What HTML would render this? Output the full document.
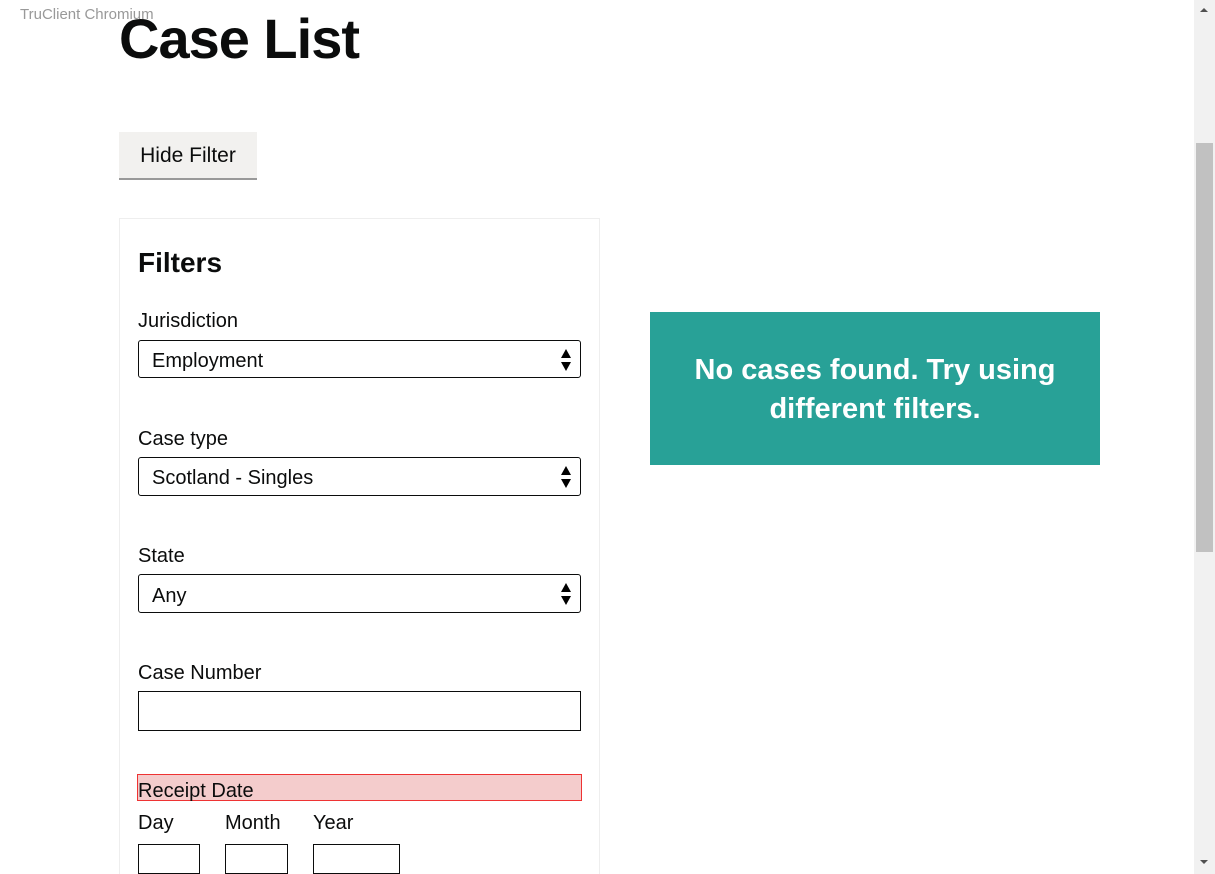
<!DOCTYPE html>
<html style="overflow:hidden;height:874px"><head><style>
body{margin:0;width:1215px;height:874px;overflow:hidden;position:relative;background:#fff;font-family:"Liberation Sans",Arial,sans-serif;color:#0b0c0c}
.a{position:absolute}
.sel{position:absolute;left:138px;width:443px;height:38px;border:1px solid #0b0c0c;border-radius:3px;box-sizing:border-box;font-size:20px;line-height:38px;padding-left:13px}
.sel:after{content:"";position:absolute;right:9px;top:8px;border:5px solid transparent;border-bottom:9px solid #000;border-top:0}
.sel:before{content:"";position:absolute;right:9px;top:21px;border:5px solid transparent;border-top:9px solid #000;border-bottom:0}
.lbl{position:absolute;left:138px;font-size:20px}
.box{position:absolute;border:1px solid #0b0c0c;box-sizing:border-box;height:30px;top:844px}
</style></head><body>
<div class="a" style="left:20px;top:6px;font-size:15px;color:#999">TruClient Chromium</div>
<div class="a" style="left:119px;top:6px;font-size:56px;font-weight:bold;letter-spacing:-1px">Case List</div>
<div class="a" style="left:119px;top:132px;width:138px;height:46px;background:#f2f1ef;border-bottom:2px solid #999;font-size:21px;line-height:48px;text-align:center">Hide Filter</div>
<div class="a" style="left:119px;top:218px;width:479px;height:660px;border:1px solid #eee"></div>
<div class="a" style="left:138px;top:247px;font-size:28px;font-weight:bold">Filters</div>
<div class="lbl" style="top:310px">Jurisdiction</div>
<div class="sel" style="top:340px;line-height:40px">Employment</div>
<div class="lbl" style="top:428px">Case type</div>
<div class="sel" style="top:457px;height:39px;line-height:40px">Scotland - Singles</div>
<div class="lbl" style="top:545px">State</div>
<div class="sel" style="top:574px;height:39px;line-height:42px">Any</div>
<div class="lbl" style="top:662px">Case Number</div>
<div class="a" style="left:138px;top:691px;width:443px;height:40px;border:1px solid #0b0c0c;box-sizing:border-box"></div>
<div class="a" style="left:137px;top:774px;width:445px;height:27px;background:#f4cccc;border:1px solid #e33;box-sizing:border-box;font-size:20px;line-height:32px">Receipt Date</div>
<div class="lbl" style="top:812px">Day</div>
<div class="lbl" style="top:812px;left:225px">Month</div>
<div class="lbl" style="top:812px;left:313px">Year</div>
<div class="box" style="left:138px;width:62px"></div>
<div class="box" style="left:225px;width:63px"></div>
<div class="box" style="left:313px;width:87px"></div>
<div class="a" style="left:650px;top:312px;width:450px;height:153px;background:#28a197;color:#fff;font-size:29px;font-weight:bold;text-align:center;line-height:39px;padding-top:39px;box-sizing:border-box">No cases found. Try using<br>different filters.</div>
<div class="a" style="left:1194px;top:0;width:21px;height:874px;background:#f1f1f1"></div>
<div class="a" style="left:1196px;top:143px;width:17px;height:409px;background:#c1c1c1"></div>
<div class="a" style="left:1200px;top:8px;border:4px solid transparent;border-bottom:4px solid #505050;border-top:0"></div>
<div class="a" style="left:1200px;top:860px;border:4px solid transparent;border-top:4px solid #505050;border-bottom:0"></div>
</body></html>
